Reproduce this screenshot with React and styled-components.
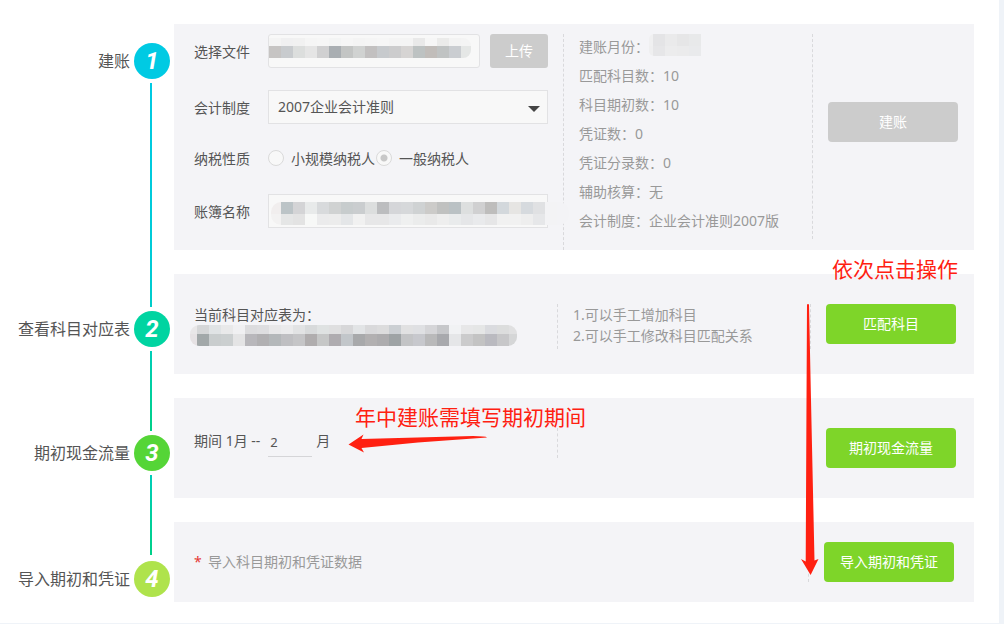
import React, { useState } from 'react';
import styled, { createGlobalStyle } from 'styled-components';

const fileCells = [
    ['#f4f4f4', '#f0f0f1', '#f1f1f1', '#f5f5f5', '#f6f6f6', '#f3f4f4', '#f6f6f6', '#f4f4f4', '#f5f5f5', '#f6f6f6', '#f4f4f4', '#f4f4f4', '#e9e9e9', '#f6f6f6', '#ebebea', '#f3f3f3', '#f4f4f4'],
    ['#c6c4c3', '#c8cbce', '#dcdedd', '#e5e5e5', '#d0d0d1', '#a9aeb2', '#c3c5c4', '#d0d2d1', '#c2c0c0', '#c7cacd', '#cccccd', '#d6d4d3', '#bdc2c2', '#c1bdba', '#c0c3c3', '#cacdd1', '#e5e7e6'],
];

const bookCells = [
    ['#f1eeee', '#bcc4c7', '#d4d4d6', '#e8eaea', '#d8dadc', '#d0d2d2', '#c7cccd', '#cacdcf', '#dcdede', '#bcbdbf', '#d5d6d9', '#d6d8da', '#cfd2d3', '#cccbc9', '#c0c1c0', '#bac1c4', '#dddfdf', '#d0d0d1', '#bebdbc', '#d3d8dc', '#e6e5e3', '#d6dade', '#e0e1e3', '#f3f3f5', '#f3f3f6'],
    ['#f3f2f2', '#e5e6e6', '#e3e3e3', '#f7f8f7', '#ebebec', '#ececec', '#e4e6e8', '#f1f1f1', '#e7e7e8', '#e7e7e8', '#eaebed', '#eff0f0', '#ebecec', '#e9e9e9', '#eeeeee', '#e9ebec', '#e5e6e8', '#e9eaec', '#e6e6e7', '#f1f1f1', '#f1f1f1', '#eeeeee', '#e6e7e9', '#f3f3f5', '#f3f3f6'],
];

const monthCells = [
    ['#f0f0f1', '#e4e4e6', '#eaeaeb', '#e6e6e7', '#e8e9ea'],
    ['#efeff0', '#e6e6e8', '#ececed', '#ebebec', '#e9eaec'],
];

const tableCells = [
    ['#e9e7e8', '#d5d6d7', '#e0e3e5', '#e9e9ea', '#f0f0f2', '#dcdcde', '#dedee0', '#e8e8e9', '#ebebec', '#e2e3e4', '#d8dadb', '#dfe2e2', '#dfdfe0', '#d7d7d9', '#e2e4e6', '#d9d9db', '#dcdcdd', '#cbcfd3', '#e1e1e2', '#dfe0e3', '#d5d5d8', '#c6c7ca', '#f1f2f4', '#e7e7e8', '#e5e6e6', '#dadbdf', '#dcdddd', '#e0e0e1'],
    ['#e6e2e4', '#a2a8a9', '#c9cdce', '#cbcfd0', '#e4e4e5', '#b8b7bb', '#b1b0b2', '#b4b8ba', '#bfbfc2', '#c5c5c7', '#b0adae', '#c6c7c7', '#afacb0', '#c2c6ca', '#a8a9ab', '#b2b0b1', '#adacae', '#9ea3a5', '#c3c4c6', '#c7c8cd', '#b9b9ba', '#a8a9ad', '#e5e6e8', '#cbcbcc', '#c3c3c3', '#babac0', '#c7c7c9', '#d5d6d7'],
];

const infoList = [
    { name: '匹配科目数', value: '10' },
    { name: '科目期初数', value: '10' },
    { name: '凭证数', value: '0' },
    { name: '凭证分录数', value: '0' },
    { name: '辅助核算', value: '无' },
    { name: '会计制度', value: '企业会计准则2007版' },
];

// blurred-out text, drawn as two rows of squares
const Mosaic = ({ id, cells, first = 12, last = 12, rows = [8, 12], radius = 8, square }) => {
    const width = first + (cells[0].length - 2) * 12 + last;
    const height = rows[0] + rows[1];
    return (
        <svg width={width} height={height} aria-hidden="true">
            <clipPath id={id}>
                <rect
                    x={square === 'left' ? -radius : 0}
                    width={square ? width + radius : width}
                    height={height}
                    rx={radius}
                />
            </clipPath>
            <g clipPath={`url(#${id})`}>
                {cells.map((row, r) => row.map((color, c) => (
                    <rect
                        key={`${r}-${c}`}
                        x={c === 0 ? 0 : first + (c - 1) * 12}
                        y={r === 0 ? 0 : rows[0]}
                        width={c === 0 ? first : 12}
                        height={rows[r]}
                        fill={color}
                    />
                )))}
            </g>
        </svg>
    );
};

// line: colours of the part above the badge and of the part below it
const StepHead = ({ number, label, color, above, below }) => (
    <Aside>
        <Line $height={above ? 33 : 15} $colors={above} />
        <Head $last={!below}>
            <StepName>{label}</StepName>
            <Badge $color={color}>{number}</Badge>
        </Head>
        {below && <Line $colors={below} />}
    </Aside>
);

const App = () => {
    const [system, setSystem] = useState('2007');
    const [taxType, setTaxType] = useState('general');
    const [month, setMonth] = useState('2');

    return (
        <Page>
            <GlobalStyle />
            <Steps>
                <Step>
                    <StepHead number={1} label="建账" color="#00cae3" below="#00cae3, #00cbd5" />
                    <Card $columns="390px 1fr 162px" $top={10}>
                        <Form>
                            <Field>
                                <Label htmlFor="file">选择文件</Label>
                                <Control>
                                    <Input id="file" type="text" readOnly $round />
                                    <Cover $left={1} $top={4}>
                                        <Mosaic id="fileMosaic" cells={fileCells} last={10} square="left" />
                                    </Cover>
                                </Control>
                                <Upload type="button">上传</Upload>
                            </Field>
                            <Field>
                                <Label htmlFor="system">会计制度</Label>
                                <Control>
                                    <Select id="system" value={system} onChange={(e) => setSystem(e.target.value)}>
                                        <option value="2007">2007企业会计准则</option>
                                        <option value="2013">2013小企业会计准则</option>
                                    </Select>
                                    <Caret width="12" height="6" viewBox="0 0 12 6" aria-hidden="true">
                                        <path d="M0 0h12L6 6z" fill="#444" />
                                    </Caret>
                                </Control>
                            </Field>
                            <RadioField>
                                <Label as="span">纳税性质</Label>
                                <RadioLabel>
                                    <Radio type="radio" name="tax" checked={taxType === 'small'} onChange={() => setTaxType('small')} />
                                    小规模纳税人
                                </RadioLabel>
                                <RadioLabel>
                                    <Radio type="radio" name="tax" checked={taxType === 'general'} onChange={() => setTaxType('general')} />
                                    一般纳税人
                                </RadioLabel>
                            </RadioField>
                            <Field>
                                <Label htmlFor="book">账簿名称</Label>
                                <Control>
                                    <Input id="book" type="text" readOnly />
                                    <Cover $left={3} $top={8}>
                                        <Mosaic id="bookMosaic" cells={bookCells} first={10} rows={[12, 11]} radius={10} />
                                    </Cover>
                                </Control>
                            </Field>
                        </Form>
                        <Info>
                            <InfoItem>
                                建账月份：
                                <Month>
                                    <Mosaic id="monthMosaic" cells={monthCells} first={4} rows={[12, 10]} radius={5} square="right" />
                                </Month>
                            </InfoItem>
                            {infoList.map((item) => (
                                <InfoItem key={item.name}>{item.name}：{item.value}</InfoItem>
                            ))}
                        </Info>
                        <Action $top={68} $bottom={11}>
                            <Button type="button" $grey>建账</Button>
                        </Action>
                    </Card>
                </Step>

                <Step>
                    <StepHead number={2} label="查看科目对应表" color="#00d4a1" above="#00cbd5, #00cdc8" below="#00ceb8, #00cf9b" />
                    <Card $columns="383px 1fr 164px" $top={30} $bottom={25}>
                        <Content>
                            当前科目对应表为：
                            <TableName>
                                <Mosaic id="tableMosaic" cells={tableCells} first={7} last={8} rows={[9, 12]} radius={9} />
                            </TableName>
                        </Content>
                        <Tips>
                            <li>1.可以手工增加科目</li>
                            <li>2.可以手工修改科目匹配关系</li>
                        </Tips>
                        <Action>
                            <Button type="button">匹配科目</Button>
                        </Action>
                    </Card>
                </Step>

                <Step>
                    <StepHead number={3} label="期初现金流量" color="#55d537" above="#00cf9b, #00d088" below="#00ceb8, #00cf9b" />
                    <Card $columns="383px 1fr 164px" $top={30} $bottom={30}>
                        <Period>
                            期间 1月 --
                            <MonthInput aria-label="期间" value={month} onChange={(e) => setMonth(e.target.value)} />
                            月
                        </Period>
                        <Blank />
                        <Action>
                            <Button type="button">期初现金流量</Button>
                        </Action>
                    </Card>
                </Step>

                <Step>
                    <StepHead number={4} label="导入期初和凭证" color="#afe34c" above="#00cf9b, #00d088" />
                    <Card $columns="1fr 166px" $top={20} $bottom={20}>
                        <Note><Star>*</Star>导入科目期初和凭证数据</Note>
                        <Action>
                            <Button type="button">导入期初和凭证</Button>
                        </Action>
                    </Card>
                </Step>

                <Remark $right={16} $top={231}>依次点击操作</Remark>
                <Remark $left={355} $top={379}>年中建账需填写期初期间</Remark>
                <LongArrow width="20" height="272" viewBox="0 0 20 272" aria-hidden="true">
                    <path d="M7 1.500Q8 .5 9 1.500L11 97L14.500 257.500L18.500 256L10.600 272L1 256L5.700 258.500L6.500 97z" fill="#ff2011" />
                </LongArrow>
                <ShortArrow width="140" height="20" viewBox="0 0 140 20" aria-hidden="true">
                    <path d="M.5 10.500L15.500 .5L13.500 5L125 2Q138 2 139 3.500L70 8.500L13.500 14L16 18.500z" fill="#ff2011" />
                </ShortArrow>
            </Steps>
        </Page>
    );
};

export default App;


const GlobalStyle = createGlobalStyle`
  * {
    box-sizing: border-box;
  }
  body {
    margin: 0;
    background-color: #eff3f8;
    font-family: "Noto Sans", "Noto Sans CJK SC", sans-serif;
    font-size: 14px;
    color: #555;
  }
  button, input, select {
    font: inherit;
    color: inherit;
  }
`;

const Page = styled.div`
  margin: 0 5px 1px 0;
  padding: 24px 25px 21px 0;
  background-color: white;
`;

const Steps = styled.div`
  position: relative;
  display: flex;
  flex-direction: column;
`;

const Step = styled.section`
  display: grid;
  grid-template-columns: 174px 1fr;

  &:not(:last-of-type) > :last-child {
    margin-bottom: 24px;
  }
`;

const Aside = styled.div`
  display: flex;
  flex-direction: column;
`;

const Line = styled.div`
  flex: ${(props) => (props.$height ? 'none' : 1)};
  width: 2px;
  height: ${(props) => (props.$height ? `${props.$height}px` : 'auto')};
  margin: 0 22px 0 auto;
  background: ${(props) => (props.$colors ? `linear-gradient(${props.$colors})` : 'none')};
`;

const Head = styled.div`
  display: flex;
  justify-content: flex-end;
  align-items: center;
  gap: 4px;
  margin: ${(props) => (props.$last ? '6px 4px 0 0' : '4px 4px 4px 0')};
`;

const StepName = styled.h2`
  margin: 0;
  font-size: 16px;
  font-weight: normal;
  line-height: 24px;
  white-space: nowrap;
`;

const Badge = styled.span`
  width: 36px;
  height: 36px;
  border-radius: 50%;
  background-color: ${(props) => props.$color};
  color: white;
  font-family: Roboto, sans-serif;
  font-size: 24px;
  font-style: italic;
  font-weight: bold;
  line-height: 36px;
  text-align: center;
`;

const Card = styled.div`
  display: grid;
  grid-template-columns: ${(props) => props.$columns};
  padding: ${(props) => props.$top}px 0 ${(props) => props.$bottom || 0}px;
  background-color: #f4f4f7;
`;

const Form = styled.form`
  display: flex;
  flex-direction: column;
  gap: 22px;
  padding: 0 15px 22px 20px;
  border-right: 1px dashed #d9d9dc;
`;

const Field = styled.div`
  display: flex;
  align-items: center;
`;

const RadioField = styled(Field)`
  height: 24px;
  margin-bottom: 2px;
`;

const Label = styled.label`
  flex: none;
  width: 74px;
`;

const Control = styled.div`
  position: relative;
  flex: 1;
`;

const Input = styled.input`
  display: block;
  width: 100%;
  height: 34px;
  border: 1px solid #e2e2e4;
  border-radius: ${(props) => (props.$round ? 3 : 0)}px;
  background-color: #f8f8f8;
`;

const Cover = styled.div`
  position: absolute;
  left: ${(props) => props.$left}px;
  top: ${(props) => props.$top}px;
  pointer-events: none;

  svg {
    display: block;
  }
`;

const Upload = styled.button`
  width: 58px;
  height: 34px;
  margin-left: 10px;
  padding: 0 0 2px;
  border: none;
  border-radius: 3px;
  background-color: #ccc;
  color: white;
`;

const Select = styled.select`
  display: block;
  appearance: none;
  width: 100%;
  height: 34px;
  padding: 0 30px 2px 9px;
  border: 1px solid #e2e2e4;
  border-radius: 0;
  background-color: #f8f8f8;
`;

const Caret = styled.svg`
  position: absolute;
  right: 8px;
  top: 16px;
  pointer-events: none;
`;

const RadioLabel = styled.label`
  display: flex;
  align-items: center;
  gap: 7px;
  margin-right: 1px;
`;

const Radio = styled.input`
  appearance: none;
  width: 16px;
  height: 16px;
  margin: 0;
  border: 1px solid #dadada;
  border-radius: 50%;
  background-color: #f8f8f8;

  &:checked {
    background-image: radial-gradient(circle, #c8c8c8 3px, transparent 4px);
  }
`;

const Info = styled.ul`
  margin: 0;
  padding: 0 15px;
  list-style: none;
  line-height: 26px;
  color: #999;
`;

const InfoItem = styled.li`
  display: flex;
  height: 29px;
`;

const Month = styled.span`
  height: 22px;

  svg {
    display: block;
  }
`;

const Action = styled.div`
  margin-bottom: ${(props) => props.$bottom || 0}px;
  padding-top: ${(props) => props.$top || 0}px;
  padding-left: 15px;
  border-left: 1px dashed #d9d9dc;
`;

const Button = styled.button`
  display: block;
  width: 130px;
  height: 40px;
  padding: 0 0 2px;
  border: none;
  border-radius: 4px;
  background-color: ${(props) => (props.$grey ? '#ccc' : '#7ed529')};
  color: white;
  cursor: pointer;
`;

const Content = styled.div`
  padding-left: 20px;
  line-height: 21px;
`;

const TableName = styled.div`
  margin-left: -4px;

  svg {
    display: block;
  }
`;

const Tips = styled.ul`
  margin: 0;
  padding: 0 15px 3px;
  list-style: none;
  border-left: 1px dashed #d9d9dc;
  line-height: 21px;
  color: #999;
`;

const Period = styled.div`
  display: flex;
  gap: 4px;
  padding-left: 20px;
  line-height: 26px;
`;

const MonthInput = styled.input`
  width: 44px;
  height: 29px;
  margin-left: 4px;
  padding: 0 2px;
  border: none;
  border-bottom: 1px solid #d5d5d8;
  border-radius: 0;
  background: none;
  font-size: 13px;
`;

const Blank = styled.div`
  height: 30px;
  border-left: 1px dashed #d9d9dc;
`;

const Note = styled.p`
  display: flex;
  align-items: center;
  margin: 0;
  padding: 0 0 2px 20px;
  color: #999;
`;

const Star = styled.span`
  width: 14px;
  color: #e53935;
`;

const Remark = styled.p`
  position: absolute;
  left: ${(props) => (props.$left ? `${props.$left}px` : 'auto')};
  right: ${(props) => (props.$right ? `${props.$right}px` : 'auto')};
  top: ${(props) => props.$top}px;
  margin: 0;
  font-size: 21px;
  line-height: 28px;
  white-space: nowrap;
  color: #ff2011;
`;

const LongArrow = styled.svg`
  position: absolute;
  right: 154px;
  top: 279px;
`;

const ShortArrow = styled.svg`
  position: absolute;
  left: 348px;
  top: 410px;
`;
